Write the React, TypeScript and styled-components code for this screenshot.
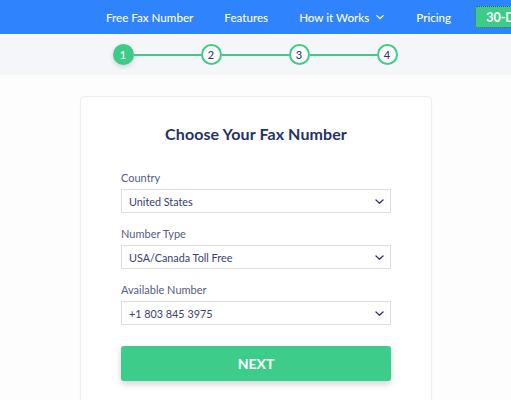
import React from 'react';
import styled, { createGlobalStyle } from 'styled-components';

const GlobalStyle = createGlobalStyle`
  html, body {
    margin: 0;
    padding: 0;
    background: #fdfdfe;
    font-family: Lato, "Open Sans", Arial, sans-serif;
    overflow: hidden;
  }
  * { box-sizing: border-box; }
`;

const navLinks = ['Free Fax Number', 'Features', 'How it Works', 'Pricing'];

const Chevron: React.FC<{ color?: string; size?: number }> = ({ color = '#fff', size = 10 }) => (
  <svg width={size} height={size} viewBox="0 0 10 10" fill="none">
    <path d="M1.8 3.6 L5 6.6 L8.2 3.6" stroke={color} strokeWidth="1.3" strokeLinecap="round" strokeLinejoin="round" />
  </svg>
);

const App: React.FC = () => {
  const steps = [1, 2, 3, 4];
  const fields = [
    { label: 'Country', value: 'United States' },
    { label: 'Number Type', value: 'USA/Canada Toll Free' },
    { label: 'Available Number', value: '+1 803 845 3975' },
  ];

  return (
    <Page>
      <GlobalStyle />
      <Header>
        <Nav>
          {navLinks.map((link) => (
            <NavItem key={link}>
              {link}
              {link === 'How it Works' && <Chevron />}
            </NavItem>
          ))}
        </Nav>
        <TrialButton>30-Day Free Trial</TrialButton>
      </Header>

      <StepBand>
        <Steps>
          {steps.map((n, i) => (
            <React.Fragment key={n}>
              {i > 0 && <StepLine />}
              <StepDot active={n === 1}>{n}</StepDot>
            </React.Fragment>
          ))}
        </Steps>
      </StepBand>

      <Card>
        <Title>Choose Your Fax Number</Title>
        <Form>
          {fields.map((f) => (
            <Field key={f.label}>
              <Label>{f.label}</Label>
              <Select>
                <span>{f.value}</span>
                <Chevron color="#3a4170" size={11} />
              </Select>
            </Field>
          ))}
          <NextButton>NEXT</NextButton>
        </Form>
      </Card>
    </Page>
  );
};

export default App;

const Page = styled.div`
  width: 511px;
  height: 400px;
  overflow: hidden;
`;

const Header = styled.header`
  height: 34px;
  background: #2f83fc;
  display: flex;
  align-items: center;
  padding-left: 106px;
  white-space: nowrap;
  overflow: hidden;
`;

const Nav = styled.nav`
  display: flex;
  align-items: center;
  gap: 31px;
  flex-shrink: 0;
`;

const NavItem = styled.span`
  display: flex;
  align-items: center;
  gap: 6px;
  color: #fff;
  font-size: 11.6px;
  font-weight: 500;
`;

const TrialButton = styled.button`
  margin-left: 24px;
  height: 22px;
  padding: 0 11px;
  flex-shrink: 0;
  background: #3ecb88;
  color: #fff;
  border: none;
  border-radius: 2px;
  outline: 1px dotted #3a4b8a;
  outline-offset: -1px;
  font-family: inherit;
  font-size: 12.5px;
  font-weight: 700;
`;

const StepBand = styled.div`
  height: 41px;
  background: #f4f6f9;
  display: flex;
  justify-content: center;
  align-items: center;
`;

const Steps = styled.div`
  display: flex;
  align-items: center;
  margin-left: -1px;
`;

const StepLine = styled.div`
  width: 67px;
  height: 2px;
  background: #3ecb88;
`;

const StepDot = styled.div<{ active?: boolean }>`
  width: 21px;
  height: 21px;
  border-radius: 50%;
  display: flex;
  align-items: center;
  justify-content: center;
  font-size: 11px;
  font-weight: 500;
  border: 2px solid #3ecb88;
  background: ${(p) => (p.active ? '#3ecb88' : '#fff')};
  color: ${(p) => (p.active ? '#fff' : '#2c3566')};
  box-shadow: ${(p) => (p.active ? '0 2px 5px rgba(0,0,0,0.15)' : 'none')};
`;

const Card = styled.section`
  width: 352px;
  margin: 21px 0 0 80px;
  background: #fff;
  border: 1px solid #eceef2;
  border-radius: 5px;
  padding: 27px 40px 40px;
  box-shadow: 0 1px 3px rgba(0, 0, 0, 0.03);
`;

const Title = styled.h1`
  margin: 0;
  text-align: center;
  font-size: 16px;
  font-weight: 700;
  color: #243266;
  letter-spacing: 0.1px;
`;

const Form = styled.div`
  margin-top: 28px;
  display: flex;
  flex-direction: column;
  gap: 14px;
`;

const Field = styled.div`
  display: flex;
  flex-direction: column;
  gap: 5px;
`;

const Label = styled.label`
  font-size: 11px;
  color: #555d80;
`;

const Select = styled.div`
  height: 24px;
  border: 1px solid #dcdde2;
  background: #fff;
  display: flex;
  align-items: center;
  justify-content: space-between;
  padding: 0 5px 0 7px;
  font-size: 10.8px;
  color: #3a4170;
`;

const NextButton = styled.button`
  margin-top: 7px;
  height: 35px;
  border: none;
  border-radius: 3px;
  background: #3ecc8a;
  color: #fff;
  font-family: inherit;
  font-size: 14px;
  font-weight: 700;
  box-shadow: 0 3px 6px rgba(0, 0, 0, 0.18);
`;
